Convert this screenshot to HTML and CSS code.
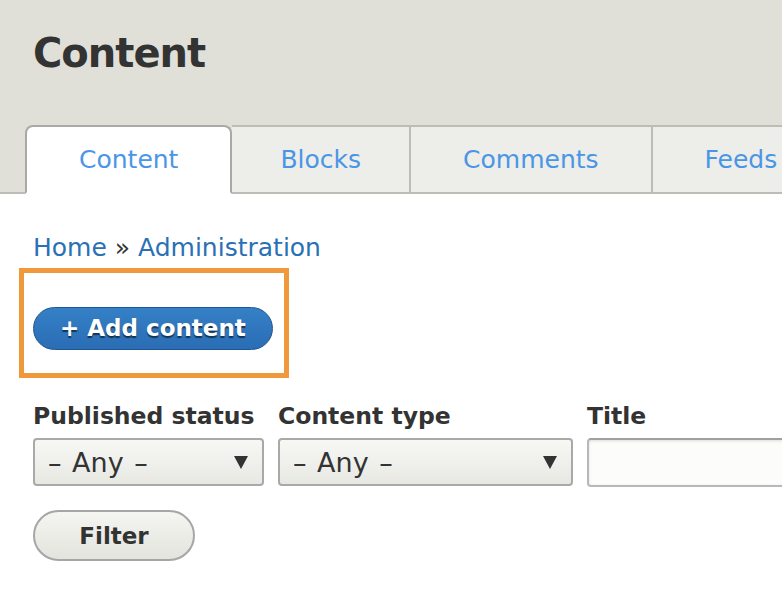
FILE: index.html
```html
<!DOCTYPE html>
<html lang="en">
<head>
    <meta charset="UTF-8">
    <meta name="viewport" content="width=device-width, initial-scale=1.0">
    <title>Content</title>
    <link rel="stylesheet" href="styles.css">
</head>
<body>

    <!-- Page header with tabs -->
    <div class="header">
        <h1 class="page-title">Content</h1>
        <ul class="tabs">
            <li class="tab active"><a href="#">Content</a></li>
            <li class="tab narrow"><a href="#">Blocks</a></li>
            <li class="tab"><a href="#">Comments</a></li>
            <li class="tab"><a href="#">Feeds</a></li>
        </ul>
    </div>

    <div class="main">
        <div class="breadcrumb">
            <a href="#">Home</a> <span class="sep">&raquo;</span> <a href="#">Administration</a>
        </div>

        <div class="highlight">
            <a href="#" class="btn-primary">+ Add content</a>
        </div>

        <!-- Exposed filters -->
        <div class="filters">
            <div class="filter-item col-status">
                <label>Published status</label>
                <div class="select"><span>&ndash; Any &ndash;</span><span class="arrow"></span></div>
            </div>
            <div class="filter-item col-type">
                <label>Content type</label>
                <div class="select"><span>&ndash; Any &ndash;</span><span class="arrow"></span></div>
            </div>
            <div class="filter-item col-title">
                <label>Title</label>
                <input type="text" class="text-input">
            </div>
        </div>

        <button class="btn">Filter</button>
    </div>

</body>
</html>
```

FILE: styles.css
```css
html {
    overflow: hidden;
}

body {
    font-family: 'DejaVu Sans', sans-serif;
    margin: 0;
    padding: 0;
    background: #fff;
    color: #333;
}

.header {
    background-color: #e0e0d8;
    border-bottom: 2px solid #bdbdb8;
    padding-top: 31px;
}

.page-title {
    margin: 0;
    padding: 0 33px;
    font-size: 40px;
    line-height: 44px;
    letter-spacing: -1px;
    font-weight: bold;
    color: #333;
}

.tabs {
    display: flex;
    list-style: none;
    margin: 50px 0 -2px;
    padding: 0 0 0 25px;
    white-space: nowrap;
}

.tab a {
    display: block;
    padding: 0 52px;
    line-height: 66px;
    height: 65px;
    font-size: 25px;
    color: #4a96e6;
    text-decoration: none;
    background-color: #ededea;
    border: 2px solid #bdbdb8;
    border-left: none;
}

.tab.narrow a {
    padding: 0 48px;
}

.tab.active a {
    background-color: #fff;
    border-color: #a9a9a6;
    border-left: 2px solid #a9a9a6;
    border-bottom-color: #fff;
    border-radius: 8px 8px 0 0;
}

.main {
    padding: 0 33px;
}

.breadcrumb {
    margin-top: 39px;
    font-size: 25px;
    line-height: 30px;
}

.breadcrumb a {
    color: #2a70b5;
    text-decoration: none;
}

.breadcrumb .sep {
    color: #333;
}

/* orange box around the action link */
.highlight {
    width: fit-content;
    margin: 5px 0 0 -14px;
    padding: 34px 11px 23px 9px;
    border: 5px solid #f0993a;
}

.btn-primary {
    display: block;
    box-sizing: border-box;
    height: 43px;
    line-height: 40px;
    padding: 0 26px;
    border: 1px solid #1f5590;
    border-radius: 22px;
    background: linear-gradient(#3580c6, #2a6db5);
    color: #fff;
    font-size: 23px;
    font-weight: bold;
    text-decoration: none;
    text-shadow: 0 2px 1px rgba(0, 0, 0, 0.55);
}

.filters {
    display: flex;
    gap: 14px;
    margin-top: 25px;
}

.filter-item {
    flex-shrink: 0;
}

.filter-item label {
    display: block;
    font-size: 23.5px;
    line-height: 26px;
    font-weight: bold;
    color: #333;
    margin-bottom: 9px;
    white-space: nowrap;
}

.col-status { width: 231px; }
.col-type { width: 295px; }
.col-title { width: 240px; }

.select {
    display: flex;
    align-items: center;
    justify-content: space-between;
    box-sizing: border-box;
    height: 48px;
    padding: 0 14px 0 13px;
    border: 2px solid #a9a9a9;
    border-radius: 4px;
    background: linear-gradient(#f7f7f4, #e8e8e3);
    font-size: 27px;
    word-spacing: 2px;
    color: #333;
}

.select .arrow {
    width: 0;
    height: 0;
    border-left: 7px solid transparent;
    border-right: 7px solid transparent;
    border-top: 13px solid #333;
}

.text-input {
    display: block;
    box-sizing: border-box;
    width: 100%;
    height: 49px;
    border: 2px solid #b8b8b8;
    border-top-color: #a0a0a0;
    border-radius: 4px;
    background: #fcfcfa;
    box-shadow: inset 0 1px 3px rgba(0, 0, 0, 0.12);
}

.btn {
    display: block;
    box-sizing: border-box;
    margin-top: 23px;
    width: 162px;
    height: 51px;
    border: 2px solid #a6a6a6;
    border-radius: 26px;
    background: linear-gradient(#f5f5f1, #e4e4de);
    font-family: 'DejaVu Sans', sans-serif;
    font-size: 23px;
    font-weight: bold;
    color: #333;
}
```
